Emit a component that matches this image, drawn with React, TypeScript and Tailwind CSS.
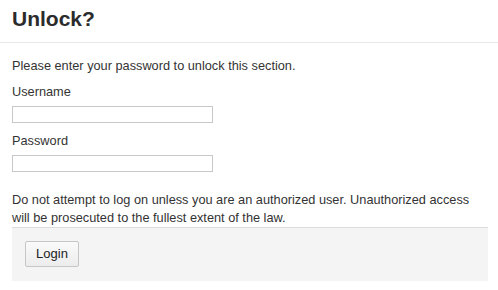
export default function App() {
  return (
    <div className="h-[290px] w-[498px] bg-white text-[#333] font-['Liberation_Sans',Arial,sans-serif]">
      <div className="h-[43px] border-b border-[#e8e8e8] pl-3 pt-[6px]">
        <h1 className="text-[21px] font-bold leading-[26px] text-[#2b2b2b]">Unlock?</h1>
      </div>
      <div className="pl-3 pr-[10px] pt-[14px] text-[12.75px] leading-[18px]">
        <p>Please enter your password to unlock this section.</p>
        <label className="mt-2 block">Username</label>
        <input type="text" className="mt-[5px] block h-[17px] w-[201px] border border-[#c8c8c8] bg-white" />
        <label className="mt-[9px] block">Password</label>
        <input type="password" className="mt-[5px] block h-[17px] w-[201px] border border-[#c8c8c8] bg-white" />
        <p className="mt-[19px]">
          Do not attempt to log on unless you are an authorized user. Unauthorized access will be prosecuted to the fullest extent of the law.
        </p>
        <div className="border-t border-[#dcdcdc] bg-[#f4f4f4] pl-[13px] pt-[13px] pb-[14px]">
          <button className="h-[26px] w-[54px] rounded-[2px] border border-[#c6c6c6] bg-gradient-to-b from-[#fafafa] to-[#ececec] text-[13px] text-[#222]">
            Login
          </button>
        </div>
      </div>
    </div>
  )
}
